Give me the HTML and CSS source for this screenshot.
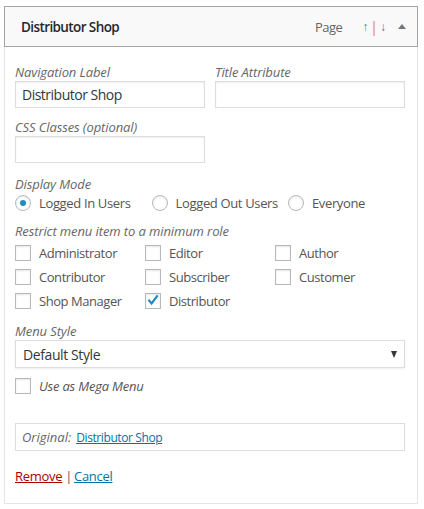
FILE: index.html
```html
<!DOCTYPE html>
<html>
<head>
<meta charset="utf-8">
<link rel="stylesheet" href="styles.css">
</head>
<body>
<div class="menu-item">
  <div class="item-bar">
    <span class="item-title">Distributor Shop</span>
    <span class="item-controls">
      <span class="item-type">Page</span>
      <span class="item-order"><span class="mv">↑</span><span class="sep">|</span><span class="mv">↓</span></span>
      <span class="toggle"></span>
    </span>
  </div>
  <div class="item-settings">
    <div class="grid2">
      <div class="field">
        <div class="lbl">Navigation Label</div>
        <div class="input">Distributor Shop</div>
      </div>
      <div class="field">
        <div class="lbl">Title Attribute</div>
        <div class="input"></div>
      </div>
      <div class="field">
        <div class="lbl">CSS Classes (optional)</div>
        <div class="input"></div>
      </div>
    </div>

    <div class="section">
      <div class="lbl">Display Mode</div>
      <div class="radios">
        <span class="opt r1"><span class="radio on"></span>Logged In Users</span>
        <span class="opt r2"><span class="radio"></span>Logged Out Users</span>
        <span class="opt"><span class="radio"></span>Everyone</span>
      </div>
    </div>

    <div class="section">
      <div class="lbl">Restrict menu item to a minimum role</div>
      <div class="roles">
        <span class="opt"><span class="cb"></span>Administrator</span>
        <span class="opt"><span class="cb"></span>Editor</span>
        <span class="opt"><span class="cb"></span>Author</span>
        <span class="opt"><span class="cb"></span>Contributor</span>
        <span class="opt"><span class="cb"></span>Subscriber</span>
        <span class="opt"><span class="cb"></span>Customer</span>
        <span class="opt"><span class="cb"></span>Shop Manager</span>
        <span class="opt"><span class="cb on"><svg viewBox="0 0 16 16" width="16" height="16"><path d="M4.2 7.6 L6.6 10.4 L12 3.2" fill="none" stroke="#1e8cbe" stroke-width="2.2" stroke-linecap="square"/></svg></span>Distributor</span>
      </div>
    </div>

    <div class="section">
      <div class="lbl">Menu Style</div>
      <div class="select"><span>Default Style</span><span class="caret"></span></div>
    </div>

    <div class="mega"><span class="opt"><span class="cb"></span><em>Use as Mega Menu</em></span></div>

    <div class="original"><em>Original:</em><a class="link">Distributor Shop</a></div>

    <div class="actions"><a class="remove">Remove</a><span class="bar">|</span><a class="link">Cancel</a></div>
  </div>
</div>
</body>
</html>
```
FILE: styles.css
```css
* { box-sizing: border-box; }
html, body { margin: 0; padding: 0; background: #fff; }
body {
  font-family: "Open Sans", "Noto Sans", sans-serif;
  font-size: 13px;
  color: #32373c;
  padding: 6px 6px 0 4px;
}
.menu-item { width: 414px; }
.item-bar {
  height: 41px;
  border: 1px solid #a0a5aa;
  background: #f9f9f9;
  display: flex;
  align-items: center;
  justify-content: space-between;
  padding: 0 11px 0 16px;
}
.item-title { font-size: 13.5px; font-weight: 600; color: #23282d; letter-spacing: -0.6px; }
.item-controls { display: flex; align-items: center; }
.item-type { color: #666; font-size: 13px; letter-spacing: -0.5px; margin-right: 20px; }
.item-order { display: flex; align-items: center; font-size: 12px; color: #0073aa; margin-right: 12px; }
.item-order .mv { color: #2a7fb8; }
.item-order .sep { color: #d98b0f; font-size: 14px; margin: 0 2px 0 2px; }
.toggle {
  width: 0; height: 0;
  border-left: 4px solid transparent;
  border-right: 4px solid transparent;
  border-bottom: 5px solid #72777c;
}
.item-settings {
  border: 1px solid #e5e5e5;
  border-top: 0;
  padding: 16px 12px 22px 10px;
  height: 457px;
}
.lbl { font-style: italic; color: #666; line-height: 18px; letter-spacing: -0.1px; }
.grid2 { display: grid; grid-template-columns: 190px 190px; column-gap: 10px; row-gap: 10px; }
.input {
  height: 27px;
  border: 1px solid #ddd;
  box-shadow: inset 0 1px 2px rgba(0,0,0,.07);
  background: #fff;
  padding: 0 6px;
  line-height: 25px;
  font-size: 14px;
  letter-spacing: -0.5px;
  color: #32373c;
}
.section { margin-top: 12px; }
.section + .section { margin-top: 9px; }
.opt { display: flex; align-items: center; height: 24px; color: #555; white-space: nowrap; letter-spacing: -0.45px; }
.radios { display: flex; height: 20px; }
.radios .opt { height: 20px; flex: none; letter-spacing: -0.35px; }
.radios .r1 { margin-right: 21px; }
.radios .r2 { margin-right: 10px; }
.radio {
  width: 16px; height: 16px; border-radius: 50%;
  border: 1px solid #b4b9be;
  box-shadow: inset 0 1px 2px rgba(0,0,0,.1);
  background: #fff;
  margin-right: 8px;
  flex: none;
  display: flex; align-items: center; justify-content: center;
}
.radio.on::before {
  content: ""; width: 6px; height: 6px; border-radius: 50%; background: #1e8cbe;
}
.roles { display: grid; grid-template-columns: 130px 130px 130px; margin-top: 1px; }
.cb {
  width: 16px; height: 16px;
  border: 1px solid #b4b9be;
  box-shadow: inset 0 1px 2px rgba(0,0,0,.1);
  background: #fff;
  margin-right: 8px;
  position: relative;
  flex: none;
}
.cb svg { position: absolute; left: -1px; top: -1px; }
.select {
  height: 28px;
  border: 1px solid #ddd;
  box-shadow: 0 1px 2px rgba(0,0,0,.07);
  display: flex; align-items: center; justify-content: space-between;
  padding: 0 7px;
  font-size: 14px;
  letter-spacing: -0.4px;
  color: #32373c;
}
.caret {
  width: 0; height: 0;
  border-left: 3.5px solid transparent;
  border-right: 3.5px solid transparent;
  border-top: 7px solid #32373c;
}
.mega { margin-top: 6px; }
.mega em { color: #555; letter-spacing: -0.2px; }
.original {
  margin-top: 25px;
  height: 28px;
  border: 1px solid #ddd;
  display: flex; align-items: center;
  padding: 0 6px;
  font-size: 13px;
}
.original em { color: #666; margin-right: 5px; }
.link { color: #0073aa; text-decoration: underline; }
.original .link { font-size: 12px; letter-spacing: -0.4px; }
.actions { margin-top: 16px; font-size: 13px; line-height: 18px; letter-spacing: -0.3px; }
.remove { color: #a00; text-decoration: underline; }
.actions .bar { color: #555; margin: 0 2px 0 3px; }
```
